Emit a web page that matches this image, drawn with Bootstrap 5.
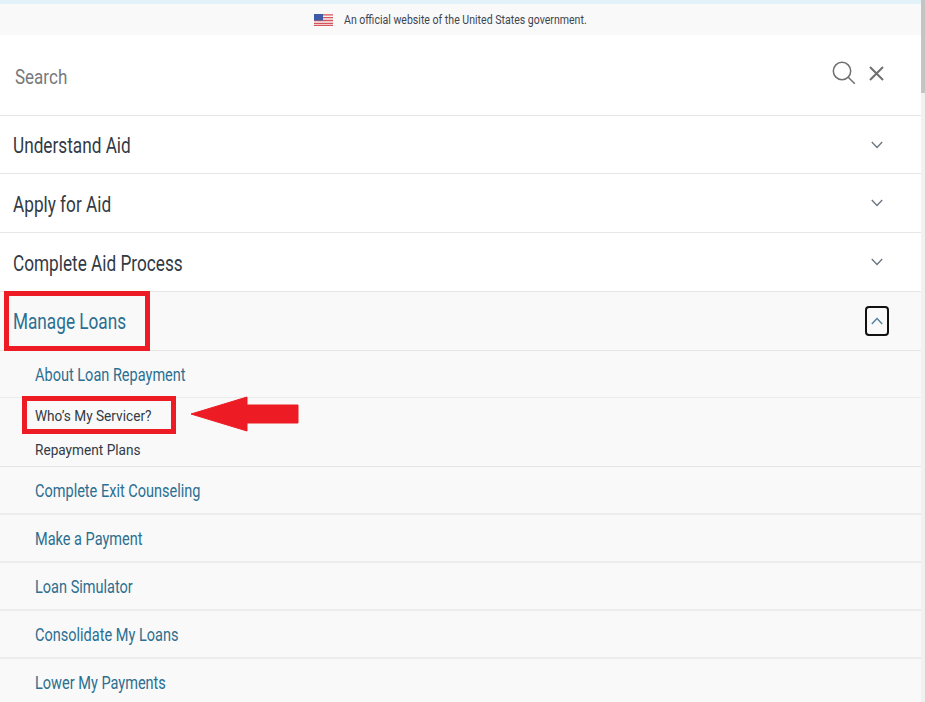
<!doctype html>
<html lang="en"><head><meta charset="utf-8"><title>Manage Loans</title>
<link href="https://cdn.jsdelivr.net/npm/bootstrap@5.3.0/dist/css/bootstrap.min.css" rel="stylesheet">
<style>
html,body{height:702px;overflow:hidden;background:#fff}
body{font-family:"Roboto",sans-serif;color:#323a45}
.stage{position:relative;height:702px;overflow:hidden}
.rail{width:4px;background:#f1f1f1;flex:none}
.rail-thumb{height:93px;background:#c4c4c4}
.main-col{flex:1 1 auto;min-width:0}
.topline{height:4px;background:#e1f3f8}
.gov{height:31px;background:#f9f9f9;font-size:12px;color:#3d4551}
.gov-txt{display:inline-block;width:264px;white-space:nowrap;transform:scaleX(.88);transform-origin:left center;margin-left:3px}
.searchbar{height:81px;border-bottom:1px solid #e6e6e6;padding:0 36px 0 15px}
.searchtxt{font-size:21px;color:#77797c;display:inline-block;transform:scaleX(.81);transform-origin:left center;padding-top:6px}
.menu-row{border-bottom:1px solid #e6e6e6;padding:0 38px 0 13px;font-size:21.5px;color:#323a45}
.menu-lbl{display:inline-block;white-space:nowrap;transform:scaleX(.8);transform-origin:left center;padding-top:3px}
.h58{height:58px}.h59{height:59px}
.h59 .menu-lbl{padding-top:5px}
.open .menu-lbl{padding-top:3px}
.open{background:#f9f9f9;color:#2b6f91;padding-right:32px}
.sub{background:#f9f9f9;padding-left:35px;font-size:17.5px;color:#2b6f91;border-bottom:2px solid #ececec}
.sub-lbl{display:inline-block;white-space:nowrap;transform:scaleX(.83);transform-origin:left center;padding-top:3px}
.sub.dark{color:#323a45;border:0;font-size:15.5px}
.dark .sub-lbl{transform:scaleX(.88);padding-top:1px}
.sub-plans .sub-lbl{padding-top:3px}
.s47{height:47px;border-bottom-width:1px}
.s48{height:48px}
.sub-who{height:35px;border-top:1px solid #e6e6e6;padding-top:1px}
.sub-plans{height:34px;border-bottom:1px solid #e6e6e6!important}
.chev-box{width:24px;height:30px;border:2px solid #111;border-radius:4px;background:#f9f9f9}
.mark-red{position:absolute;border:5px solid #ed1c24}
.m1{left:4px;top:291px;width:146px;height:60px}
.m2{left:22px;top:396px;width:154px;height:38px}
.arrow{position:absolute;left:190px;top:396px}
</style></head>
<body>
<div class="stage d-flex">
<div class="main-col">
<div class="topline"></div>
<div class="gov d-flex align-items-center justify-content-center gap-2">
<svg width="19" height="12" viewBox="0 0 19 12" aria-hidden="true"><rect width="19" height="12" fill="#f4f4f4"/><path d="M0 .9h19M0 3.7h19M0 6.5h19M0 9.300h19M0 11.400h19" stroke="#d9535a" stroke-width="1.300"/><rect width="9" height="6.500" fill="#3f5aa6"/></svg>
<span class="gov-txt">An official website of the United States government.</span>
</div>
<div class="searchbar d-flex align-items-center justify-content-between">
<span class="searchtxt">Search</span>
<div class="d-flex align-items-center gap-2">
<svg class="mb-1" width="24" height="24" viewBox="0 0 24 24" fill="none" stroke="#6f6f6f" stroke-width="1.500" aria-hidden="true"><circle cx="10" cy="10" r="8.700"/><path d="M16.200 16.200 22.800 22.800"/></svg>
<svg class="ms-1 mb-1" width="17" height="17" viewBox="0 0 17 17" fill="none" stroke="#6f6f6f" stroke-width="2" aria-hidden="true"><path d="M2 2 15 15M15 2 2 15"/></svg>
</div>
</div>
<div class="menu-row h58 d-flex align-items-center justify-content-between"><span class="menu-lbl">Understand Aid</span>
<svg width="12" height="8" viewBox="0 0 12 8" fill="none" stroke="#6b7480" stroke-width="1.300" aria-hidden="true"><path d="M.8 1 6 6.500 11.200 1"/></svg></div>
<div class="menu-row h59 d-flex align-items-center justify-content-between"><span class="menu-lbl">Apply for Aid</span>
<svg width="12" height="8" viewBox="0 0 12 8" fill="none" stroke="#6b7480" stroke-width="1.300" aria-hidden="true"><path d="M.8 1 6 6.500 11.200 1"/></svg></div>
<div class="menu-row h59 d-flex align-items-center justify-content-between"><span class="menu-lbl">Complete Aid Process</span>
<svg width="12" height="8" viewBox="0 0 12 8" fill="none" stroke="#6b7480" stroke-width="1.300" aria-hidden="true"><path d="M.8 1 6 6.500 11.200 1"/></svg></div>
<div class="menu-row h59 open d-flex align-items-center justify-content-between"><span class="menu-lbl">Manage Loans</span>
<span class="chev-box d-flex align-items-center justify-content-center"><svg width="12" height="8" viewBox="0 0 12 8" fill="none" stroke="#4d7f98" stroke-width="1.300" aria-hidden="true"><path d="M.8 7 6 1.500 11.200 7"/></svg></span></div>
<div class="sub s47 d-flex align-items-center"><span class="sub-lbl">About Loan Repayment</span></div>
<div class="sub dark sub-who d-flex align-items-center"><span class="sub-lbl">Who’s My Servicer?</span></div>
<div class="sub dark sub-plans d-flex align-items-center"><span class="sub-lbl">Repayment Plans</span></div>
<div class="sub s48 d-flex align-items-center"><span class="sub-lbl">Complete Exit Counseling</span></div>
<div class="sub s48 d-flex align-items-center"><span class="sub-lbl">Make a Payment</span></div>
<div class="sub s48 d-flex align-items-center"><span class="sub-lbl">Loan Simulator</span></div>
<div class="sub s48 d-flex align-items-center"><span class="sub-lbl">Consolidate My Loans</span></div>
<div class="sub s48 d-flex align-items-center"><span class="sub-lbl">Lower My Payments</span></div>
</div>
<div class="rail"><div class="rail-thumb"></div></div>
<div class="mark-red m1"></div>
<div class="mark-red m2"></div>
<svg class="arrow" width="110" height="36" viewBox="0 0 110 36" aria-hidden="true"><path d="M1 18 57 1v8h51v18H57v8z" fill="#ed1c24" stroke="#ed1c24" stroke-linejoin="round"/></svg>
</div>
</body></html>
